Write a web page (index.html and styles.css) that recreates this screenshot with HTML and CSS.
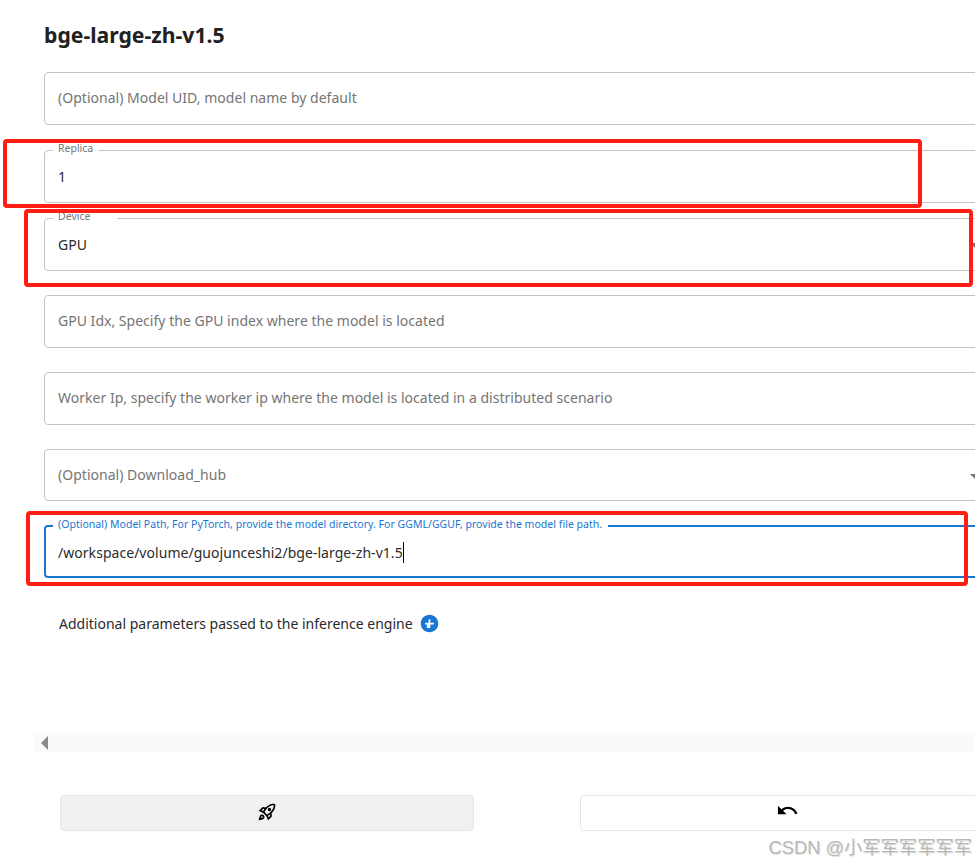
FILE: index.html
```
<!DOCTYPE html>
<html lang="en">
<head>
<meta charset="utf-8">
<title>bge-large-zh-v1.5</title>
<link rel="stylesheet" href="styles.css">
</head>
<body>
<div class="page">
  <h1 class="title">bge-large-zh-v1.5</h1>
  <div class="form">
    <div class="field gap-first"><span class="placeholder">(Optional) Model UID, model name by default</span></div>
    <div class="field gap-replica"><span class="label">Replica</span><span class="value">1</span></div>
    <div class="field gap-device"><span class="label label-device">Device</span><span class="value">GPU</span><i class="arrow"></i></div>
    <div class="field gap-std"><span class="placeholder">GPU Idx, Specify the GPU index where the model is located</span></div>
    <div class="field gap-std"><span class="placeholder">Worker Ip, specify the worker ip where the model is located in a distributed scenario</span></div>
    <div class="field field-short gap-std"><span class="placeholder">(Optional) Download_hub</span><i class="arrow"></i></div>
    <div class="field field-focus gap-path"><span class="label label-focus">(Optional) Model Path, For PyTorch, provide the model directory. For GGML/GGUF, provide the model file path.</span><span class="value value-path">/workspace/volume/guojunceshi2/bge-large-zh-v1.5</span><i class="caret"></i></div>
  </div>
  <div class="params">
    <span>Additional parameters passed to the inference engine</span>
    <svg class="plus" viewBox="0 0 24 24"><path d="M12 2C6.48 2 2 6.48 2 12s4.48 10 10 10 10-4.48 10-10S17.52 2 12 2zm5 11h-4v4h-4v-4H7v-2h4V7h2v4h4v2z"/></svg>
  </div>
  <div class="scrollbar"><i class="scroll-left"></i></div>
  <div class="actions">
    <button class="btn btn-launch" type="button" aria-label="Launch">
      <svg class="rocket" viewBox="0 0 24 24"><path d="M6 15c-.83 0-1.58.34-2.12.88C2.7 17.06 2 22 2 22s4.94-.7 6.12-1.88c.54-.54.88-1.29.88-2.12 0-1.66-1.34-3-3-3zm.71 3.71c-.28.28-2.17.76-2.17.76s.47-1.88.76-2.17c.17-.19.42-.3.7-.3.55 0 1 .45 1 1 0 .28-.11.53-.29.71zm10.71-5.06c6.36-6.36 4.24-11.31 4.24-11.31S16.71.22 10.35 6.58l-2.49-.5c-.65-.13-1.33.08-1.81.55L2 10.69l5 2.14L11.17 17l2.14 5 4.05-4.05c.47-.47.68-1.15.55-1.81l-.49-2.49zM7.41 10.83l-1.91-.82 1.97-1.97 1.44.29c-.57.83-1.08 1.7-1.5 2.5zm6.58 7.67l-.82-1.91c.8-.42 1.67-.93 2.49-1.5l.29 1.44-1.96 1.97zM16 12.24c-1.32 1.32-3.38 2.4-4.04 2.73l-2.93-2.93c.32-.65 1.4-2.71 2.73-4.04 4.68-4.68 8.23-3.99 8.23-3.99s.69 3.55-3.99 8.23zM15 11c1.1 0 2-.9 2-2s-.9-2-2-2-2 .9-2 2 .9 2 2 2z"/></svg>
    </button>
    <button class="btn btn-undo" type="button" aria-label="Undo">
      <svg class="undo" viewBox="0 0 24 24"><path d="M12.5 8c-2.65 0-5.05.99-6.9 2.6L2 7v9h9l-3.62-3.62c1.39-1.16 3.16-1.88 5.12-1.88 3.54 0 6.55 2.31 7.6 5.5l2.37-.78C21.08 11.03 17.15 8 12.5 8z"/></svg>
    </button>
  </div>
  <div class="mark mark-replica"></div>
  <div class="mark mark-device"></div>
  <div class="mark mark-path"></div>
  <div class="watermark">CSDN @小军军军军军军</div>
</div>
</body>
</html>
```
FILE: styles.css
```
* { box-sizing: border-box; }
html, body { margin: 0; padding: 0; background: #fff; }
.page {
  position: relative;
  width: 975px;
  height: 865px;
  overflow: hidden;
  padding: 22px 0 0 44px;
  font-family: "Noto Sans", "Noto Sans CJK SC", sans-serif;
  color: rgba(0,0,0,.87);
}
.title {
  margin: 0;
  font-size: 21.2px;
  line-height: 26px;
  font-weight: 700;
  color: #212121;
}
.form { width: 1000px; }
.field {
  position: relative;
  display: flex;
  align-items: center;
  height: 53px;
  padding: 0 13px;
  border: 1px solid #c4c4c4;
  border-radius: 4px;
  font-size: 14px;
  white-space: nowrap;
}
.field-short { height: 52px; }
.gap-first { margin-top: 24px; }
.gap-replica { margin-top: 25px; }
.gap-device { margin-top: 15px; }
.gap-std { margin-top: 24px; }
.gap-path { margin-top: 24px; }
.field-focus { border: 2px solid #1976d2; padding: 0 12px; }
.placeholder { color: #757575; margin-bottom: 2px; letter-spacing: .02px; }
.value { color: #2b2b2b; }
.value-path { letter-spacing: .04px; margin-top: 1px; }
.label {
  position: absolute;
  left: 8px;
  top: -8px;
  padding: 0 5px;
  background: #fff;
  font-size: 10.5px;
  line-height: 11px;
  color: #757575;
}
.label-device { padding-right: 27px; }
.label-focus { left: 7px; top: -8px; padding: 0 6px 0 5px; color: #1976d2; letter-spacing: .03px; }
.arrow {
  position: absolute;
  left: 925px;
  top: 24px;
  border-left: 5px solid transparent;
  border-right: 5px solid transparent;
  border-top: 5px solid #757575;
}
.caret {
  width: 1px;
  height: 21px;
  margin-top: 1px;
  background: #000;
}
.params {
  display: flex;
  align-items: center;
  gap: 6px;
  margin: 33px 0 0 15px;
  height: 24px;
  font-size: 14px;
  color: #2b2b2b;
}
.plus { width: 21px; height: 21px; fill: #1976d2; }
.scrollbar {
  display: flex;
  align-items: center;
  height: 19px;
  margin: 98px 0 0 -10px;
  padding-left: 7px;
  background: #fafafa;
}
.scroll-left {
  border-top: 7px solid transparent;
  border-bottom: 7px solid transparent;
  border-right: 7px solid #8a8a8a;
}
.actions {
  display: flex;
  gap: 106px;
  margin: 43px 0 0 16px;
  width: 1000px;
}
.btn {
  display: flex;
  align-items: center;
  justify-content: center;
  flex: none;
  width: 414px;
  height: 36px;
  padding: 0;
  border: 1px solid #e5e5e5;
  border-radius: 4px;
  background: #fff;
}
.btn-launch { background: #f1f1f1; }
.rocket { width: 20px; height: 20px; fill: #000; margin-bottom: 2px; }
.undo { width: 23px; height: 23px; fill: #000; margin-bottom: 5px; }
.mark {
  position: absolute;
  border: 4px solid #ff1e14;
  border-radius: 4px;
}
.mark-replica { left: 3px; top: 139px; width: 919px; height: 69px; }
.mark-device { left: 24px; top: 209px; width: 949px; height: 78px; }
.mark-path { left: 26px; top: 511px; width: 942px; height: 75px; }
.watermark {
  position: absolute;
  right: 3px;
  top: 837px;
  font-family: "Liberation Sans", "Noto Sans CJK SC", sans-serif;
  font-size: 18.3px;
  line-height: 22px;
  color: #b8b8b8;
  text-shadow: 1px 1px 1px #e2e2e2;
  white-space: nowrap;
}
```
